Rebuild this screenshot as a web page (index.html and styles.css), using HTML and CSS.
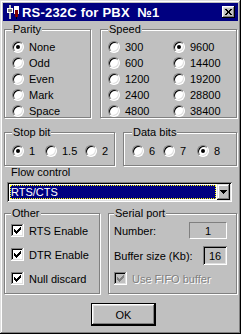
FILE: index.html
```html
<!DOCTYPE html>
<html>
<head>
<meta charset="utf-8">
<title>RS-232C for PBX №1</title>
<link rel="stylesheet" href="styles.css">
</head>
<body>
<svg class="defs" width="0" height="0" aria-hidden="true">
  <defs>
    <symbol id="cb-on" viewBox="0 0 13 13">
      <path fill="#808080" d="M0 0h12v1H1v11H0z"/>
      <path fill="#ffffff" d="M12 0h1v13H0v-1h12z"/>
      <path fill="#000000" d="M1 1h10v1H2v9H1z"/>
      <path fill="#dfdfdf" d="M11 1h1v11H1v-1h10z"/>
      <rect x="2" y="2" width="9" height="9" fill="#ffffff"/>
      <path fill="#000000" d="M3 5h1v3H3zM4 6h1v3H4zM5 7h1v3H5zM6 6h1v3H6zM7 5h1v3H7zM8 4h1v3H8zM9 3h1v3H9z"/>
    </symbol>
    <symbol id="cb-dis" viewBox="0 0 13 13">
      <path fill="#808080" d="M0 0h12v1H1v11H0z"/>
      <path fill="#ffffff" d="M12 0h1v13H0v-1h12z"/>
      <path fill="#000000" d="M1 1h10v1H2v9H1z"/>
      <path fill="#dfdfdf" d="M11 1h1v11H1v-1h10z"/>
      <rect x="2" y="2" width="9" height="9" fill="#c0c0c0"/>
      <path fill="#808080" d="M3 5h1v3H3zM4 6h1v3H4zM5 7h1v3H5zM6 6h1v3H6zM7 5h1v3H7zM8 4h1v3H8zM9 3h1v3H9z"/>
    </symbol>
  </defs>
</svg>
<div class="window">
  <div class="titlebar">
    <svg class="appicon" width="16" height="16" viewBox="0 0 16 16">
      <rect x="5" y="1" width="2" height="14" fill="#c0c0c0"/>
      <rect x="3" y="4" width="6" height="5" fill="#ffffff"/>
      <rect x="4" y="5" width="4" height="3" fill="#808080"/>
      <rect x="10" y="2" width="5" height="8" fill="#ffffff"/>
      <rect x="11" y="6" width="3" height="7" fill="#800000"/>
      <rect x="12" y="13" width="1" height="2" fill="#000000"/>
    </svg>
    <span class="title">RS-232C for PBX  №1</span>
    <span class="close">
      <svg width="7" height="6" viewBox="0 0 7 6"><path fill="#000" d="M0 0h2v1H0zM5 0h2v1H5zM1 1h2v1H1zM4 1h2v1H4zM2 2h3v2H2zM1 4h2v1H1zM4 4h2v1H4zM0 5h2v1H0zM5 5h2v1H5z"/></svg>
    </span>
  </div>

  <div class="content">
    <div class="row row-top">
      <fieldset class="group parity">
        <legend>Parity</legend>
        <div class="list">
          <div class="opt"><span class="radio on"></span>None</div>
          <div class="opt"><span class="radio"></span>Odd</div>
          <div class="opt"><span class="radio"></span>Even</div>
          <div class="opt"><span class="radio"></span>Mark</div>
          <div class="opt"><span class="radio"></span>Space</div>
        </div>
      </fieldset>
      <fieldset class="group speed">
        <legend>Speed</legend>
        <div class="speed-grid">
          <div class="opt"><span class="radio"></span>300</div>
          <div class="opt"><span class="radio on"></span>9600</div>
          <div class="opt"><span class="radio"></span>600</div>
          <div class="opt"><span class="radio"></span>14400</div>
          <div class="opt"><span class="radio"></span>1200</div>
          <div class="opt"><span class="radio"></span>19200</div>
          <div class="opt"><span class="radio"></span>2400</div>
          <div class="opt"><span class="radio"></span>28800</div>
          <div class="opt"><span class="radio"></span>4800</div>
          <div class="opt"><span class="radio"></span>38400</div>
        </div>
      </fieldset>
    </div>

    <div class="row row-bits">
      <fieldset class="group stop">
        <legend>Stop bit</legend>
        <div class="inline-opts stop-opts">
          <div class="opt"><span class="radio on"></span>1</div>
          <div class="opt"><span class="radio"></span>1.5</div>
          <div class="opt"><span class="radio"></span>2</div>
        </div>
      </fieldset>
      <fieldset class="group data">
        <legend>Data bits</legend>
        <div class="inline-opts data-opts">
          <div class="opt"><span class="radio"></span>6</div>
          <div class="opt"><span class="radio"></span>7</div>
          <div class="opt"><span class="radio on"></span>8</div>
        </div>
      </fieldset>
    </div>

    <div class="label">Flow control</div>
    <div class="combo">
      <div class="value">RTS/CTS</div>
      <div class="drop">
        <svg width="7" height="4" viewBox="0 0 7 4"><path fill="#000" d="M0 0h7v1H0zM1 1h5v1H1zM2 2h3v1H2zM3 3h1v1H3z"/></svg>
      </div>
    </div>

    <div class="row row-bottom">
      <fieldset class="group other">
        <legend>Other</legend>
        <div class="checks">
          <div class="opt"><svg class="cb" width="13" height="13"><use href="#cb-on"/></svg>RTS Enable</div>
          <div class="opt"><svg class="cb" width="13" height="13"><use href="#cb-on"/></svg>DTR Enable</div>
          <div class="opt"><svg class="cb" width="13" height="13"><use href="#cb-on"/></svg>Null discard</div>
        </div>
      </fieldset>
      <fieldset class="group serial">
        <legend>Serial port</legend>
        <div class="serial-rows">
          <div class="srow srow-num"><span>Number:</span><span class="num">1</span></div>
          <div class="srow srow-buf"><span>Buffer size (Kb):</span><span class="buf">16</span></div>
          <div class="opt disabled"><svg class="cb" width="13" height="13"><use href="#cb-dis"/></svg>Use FIFO buffer</div>
        </div>
      </fieldset>
    </div>

    <button class="ok" type="button">OK</button>
  </div>
</div>
</body>
</html>
```

FILE: styles.css
```css
* {
  box-sizing: border-box;
}

html,
body {
  margin: 0;
  padding: 0;
}

body {
  font-family: "Liberation Sans", Arial, sans-serif;
  font-size: 11px;
  color: #000;
  background: #c0c0c0;
}

.defs {
  position: absolute;
  width: 0;
  height: 0;
  overflow: hidden;
}

.window {
  width: 241px;
  height: 334px;
  padding: 3px;
  background: #c0c0c0;
  box-shadow: inset -1px -1px #000, inset 1px 1px #dfdfdf,
    inset -2px -2px #808080, inset 2px 2px #fff;
  display: flex;
  flex-direction: column;
}

/* Title bar */
.titlebar {
  height: 18px;
  flex: none;
  background: #000080;
  color: #fff;
  display: flex;
  align-items: center;
  padding-left: 1px;
}

.appicon {
  flex: none;
  display: block;
}

.title {
  margin-left: 2px;
  font-weight: bold;
  font-size: 13px;
  white-space: pre;
  letter-spacing: 0.2px;
}

.close {
  margin-left: auto;
  margin-right: 3px;
  width: 13px;
  height: 12px;
  background: #c0c0c0;
  box-shadow: inset -1px -1px #000, inset 1px 1px #fff,
    inset -2px -2px #808080, inset 2px 2px #dfdfdf;
  display: flex;
  align-items: center;
  justify-content: center;
}

.close svg {
  display: block;
}

/* Content */
.content {
  padding: 0 1px;
  display: flex;
  flex-direction: column;
}

.row {
  display: flex;
  align-items: stretch;
}

.row-top {
  margin-top: 2px;
  gap: 9px;
}

.row-bits {
  margin-top: 8px;
  gap: 8px;
}

.row-bottom {
  margin-top: 5px;
  gap: 8px;
}

/* Group boxes */
.group {
  margin: 0;
  min-width: 0;
  border: 1px solid #808080;
  box-shadow: inset 1px 1px #fff, 1px 1px #fff;
}

.group legend {
  padding: 0 1px;
  line-height: 13px;
  background: #c0c0c0;
}

.parity {
  width: 87px;
  flex: none;
  padding: 4px 0 0 7px;
}

.speed {
  flex: 1;
  padding: 4px 0 0 7px;
}

.stop {
  width: 111px;
  flex: none;
  padding: 5px 0 8px 7px;
}

.data {
  flex: 1;
  padding: 5px 0 8px 8px;
}

.other {
  width: 96px;
  flex: none;
  padding: 4px 0 8px 6px;
}

.serial {
  flex: 1;
  padding: 2px 9px 8px 5px;
}

/* Options */
.opt {
  display: flex;
  align-items: center;
  gap: 5px;
  height: 13px;
  white-space: nowrap;
}

.list {
  display: flex;
  flex-direction: column;
  gap: 3px;
}

.speed-grid {
  display: grid;
  grid-template-columns: 65px auto;
  grid-auto-rows: 13px;
  row-gap: 3px;
}

.inline-opts {
  display: grid;
  grid-auto-rows: 13px;
}

.stop-opts {
  grid-template-columns: 33px 40px auto;
}

.data-opts {
  grid-template-columns: 31px 34px auto;
}

.radio {
  flex: none;
  width: 12px;
  height: 12px;
  border-radius: 50%;
  border: 1px solid;
  border-color: #808080 #fff #fff #808080;
  background: #fff;
  box-shadow: inset 1px 1px #000, inset -1px -1px #dfdfdf;
  display: inline-flex;
  align-items: center;
  justify-content: center;
}

.radio.on::after {
  content: "";
  width: 4px;
  height: 4px;
  border-radius: 50%;
  background: #000;
}

.cb {
  flex: none;
  display: block;
}

.checks {
  display: flex;
  flex-direction: column;
  gap: 11px;
}

/* Flow control */
.label {
  padding-left: 7px;
  line-height: 13px;
}

.combo {
  margin: 3px 0 0 3px;
  width: 225px;
  height: 20px;
  background: #fff;
  box-shadow: inset 1px 1px #808080, inset -1px -1px #fff,
    inset 2px 2px #000, inset -2px -2px #dfdfdf;
  padding: 2px;
  display: flex;
}

.combo .value {
  flex: 1;
  margin: 1px;
  background: #000080;
  color: #fff;
  border: 1px dotted #ffff00;
  display: flex;
  align-items: center;
  padding-left: 0;
  line-height: 12px;
}

.combo .drop {
  flex: none;
  width: 13px;
  background: #c0c0c0;
  box-shadow: inset -1px -1px #000, inset 1px 1px #dfdfdf,
    inset -2px -2px #808080, inset 2px 2px #fff;
  display: flex;
  align-items: center;
  justify-content: center;
}

.combo .drop svg {
  display: block;
}

/* Serial port */
.serial-rows {
  display: flex;
  flex-direction: column;
  gap: 7px;
}

.srow {
  display: flex;
  align-items: center;
  white-space: nowrap;
}

.srow-num {
  height: 17px;
}

.srow-buf {
  height: 19px;
}

.num {
  margin-left: auto;
  width: 38px;
  height: 17px;
  border: 1px solid;
  border-color: #808080 #fff #fff #808080;
  display: flex;
  align-items: center;
  justify-content: center;
}

.buf {
  margin-left: auto;
  width: 24px;
  height: 19px;
  box-shadow: inset 1px 1px #808080, inset -1px -1px #fff,
    inset 2px 2px #000, inset -2px -2px #dfdfdf;
  display: flex;
  align-items: center;
  justify-content: center;
}

.disabled {
  color: #808080;
  text-shadow: 1px 1px #fff;
}

/* OK button */
.ok {
  margin: 9px 0 0 87px;
  width: 65px;
  height: 23px;
  padding: 0;
  font: inherit;
  color: #000;
  background: #c0c0c0;
  border: 1px solid #000;
  border-radius: 0;
  box-shadow: inset -1px -1px #000, inset 1px 1px #fff,
    inset -2px -2px #808080, inset 2px 2px #dfdfdf;
  display: flex;
  align-items: center;
  justify-content: center;
}
```
